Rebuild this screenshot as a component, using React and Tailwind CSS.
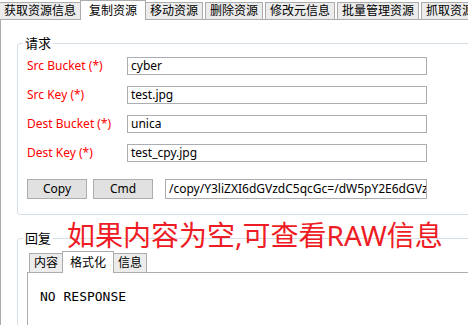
import React from 'react';

const tabs = ['获取资源信息', '复制资源', '移动资源', '删除资源', '修改元信息', '批量管理资源', '抓取资源'];

const fields = [
  { label: 'Src Bucket (*)', value: 'cyber' },
  { label: 'Src Key (*)', value: 'test.jpg' },
  { label: 'Dest Bucket (*)', value: 'unica' },
  { label: 'Dest Key (*)', value: 'test_cpy.jpg' },
];

const GroupBox = ({ title, className, children }) => (
  <div className={`relative border border-[#d5dfe5] rounded-[3px] ml-[16px] w-[470px] ${className}`}>
    <span className="absolute -top-[9px] left-[5px] px-[2px] bg-white text-[13px] leading-[16px] text-black">{title}</span>
    {children}
  </div>
);

const App = () => {
  return (
    <div className="relative w-[468px] h-[325px] overflow-hidden bg-white text-[12px] text-black font-['Noto_Sans','Noto_Sans_CJK_SC',sans-serif]">
      {/* Top tabs */}
      <div className="flex items-end h-[20px] border-b border-[#acacac] -ml-px whitespace-nowrap">
        {tabs.map((t, i) => {
          const active = i === 1;
          if (active) {
            return (
              <div key={t} className="relative z-10 -ml-px -mb-px h-[20px] px-[8px] flex items-center border-x border-t border-[#acacac] bg-white leading-none">
                {t}
              </div>
            );
          }
          return (
            <div
              key={t}
              className={`h-[17px] px-[4px] flex items-center border-x border-t border-[#acacac] bg-[#ececec] leading-none ${i > 2 ? 'ml-[2px]' : ''} ${i === 2 ? '-ml-px' : ''}`}
            >
              {t}
            </div>
          );
        })}
      </div>

      {/* Tab page */}
      <div className="h-[305px] border-l border-[#acacac] pt-[23px]">
        <GroupBox title="请求" className="h-[172px] pt-[13px] pl-[9px]">
          <div className="flex flex-col gap-[11px]">
            {fields.map(f => (
              <div key={f.label} className="flex items-center h-[18px]">
                <span className="w-[100px] text-[#ff0000] leading-none">{f.label}</span>
                <div className="w-[300px] h-[18px] border border-[#abadb3] px-[3px] flex items-center leading-none">{f.value}</div>
              </div>
            ))}
          </div>
          <div className="flex items-center mt-[17px]">
            <button className="w-[60px] h-[20px] border border-[#adadad] bg-[#e1e1e1] leading-none">Copy</button>
            <button className="w-[60px] h-[20px] ml-[6px] border border-[#adadad] bg-[#e1e1e1] leading-none">Cmd</button>
            <div className="w-[262px] h-[20px] ml-[12px] border border-[#abadb3] px-[3px] flex items-center overflow-hidden whitespace-nowrap leading-none">
              /copy/Y3liZXI6dGVzdC5qcGc=/dW5pY2E6dGVzdF9jcHkuanBn
            </div>
          </div>
        </GroupBox>

        <GroupBox title="回复" className="mt-[23px] h-[120px] pt-[12px] pl-[9px]">
          <div className="flex items-end h-[22px] border-b border-[#acacac] whitespace-nowrap">
            <div className="ml-[2px] h-[19px] px-[4px] flex items-center border-x border-t border-[#acacac] bg-[#ececec] leading-none">内容</div>
            <div className="relative z-10 -ml-px -mb-px h-[22px] px-[7px] flex items-center border-x border-t border-[#acacac] bg-white leading-none">格式化</div>
            <div className="-ml-px h-[19px] px-[4px] flex items-center border-x border-t border-[#acacac] bg-[#ececec] leading-none">信息</div>
          </div>
          <div className="h-[60px] border-l border-[#acacac] pt-[16px] pl-[12px] font-['DejaVu_Sans_Mono',monospace] text-[13px] leading-[16px]">
            NO RESPONSE
          </div>
        </GroupBox>
      </div>

      {/* Annotation */}
      <div className="absolute left-[67px] top-[219px] text-[28px] leading-[32px] text-[#ee1c25] whitespace-nowrap">
        如果内容为空,可查看RAW信息
      </div>
    </div>
  );
};

export default App;
